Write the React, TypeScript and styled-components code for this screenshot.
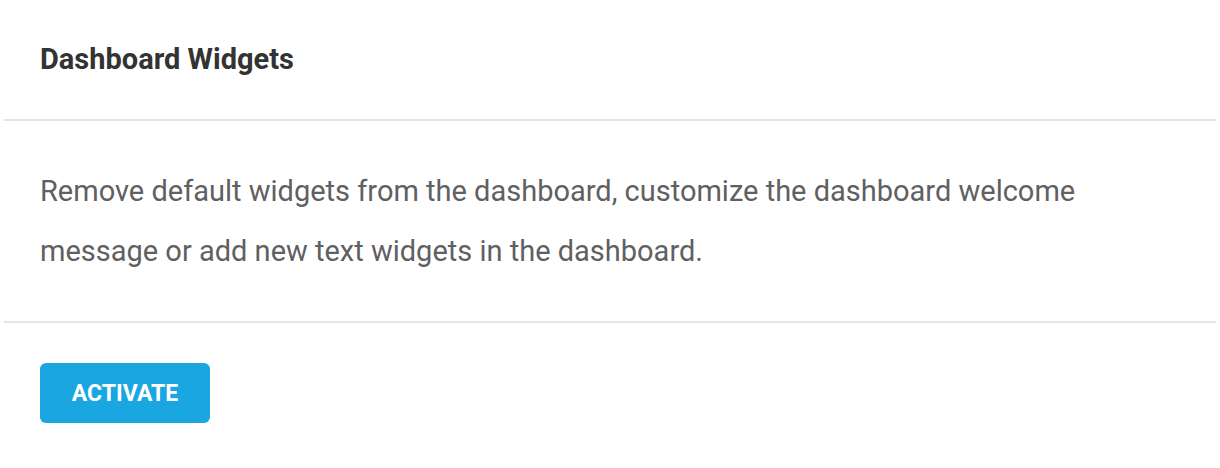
import React from "react";
import styled, { createGlobalStyle } from "styled-components";

const Global = createGlobalStyle`
  html, body { margin: 0; padding: 0; background: #ffffff; }
  body { font-family: Roboto, "Liberation Sans", sans-serif; }
`;

const Page = styled.div`
  padding: 0 4px;
  width: 1220px;
  box-sizing: border-box;
`;

const Card = styled.section`
  display: flex;
  flex-direction: column;
  background: #ffffff;
`;

const Header = styled.header`
  height: 121px;
  box-sizing: border-box;
  padding: 40px 36px 0;
  border-bottom: 2px solid #e5e5e5;
`;

const Title = styled.h2`
  margin: 0;
  font-size: 29px;
  line-height: 38px;
  font-weight: 700;
  color: #333333;
`;

const Body = styled.div`
  height: 202px;
  box-sizing: border-box;
  padding: 40px 36px 0;
  border-bottom: 2px solid #e5e5e5;
`;

const Text = styled.p`
  margin: 0;
  font-size: 29px;
  line-height: 60px;
  color: #5f6062;
  max-width: 1100px;
`;

const Footer = styled.div`
  padding: 40px 36px;
  background: #ffffff;
`;

const Button = styled.button`
  display: inline-flex;
  align-items: center;
  justify-content: center;
  width: 170px;
  height: 60px;
  border: none;
  border-radius: 6px;
  background: #1aa7e1;
  color: #ffffff;
  font-family: Roboto, "Liberation Sans", sans-serif;
  font-size: 23px;
  font-weight: 700;
  text-transform: uppercase;
  cursor: pointer;
`;

export default function App() {
  return (
    <Page>
      <Global />
      <Card>
        <Header>
          <Title>Dashboard Widgets</Title>
        </Header>
        <Body>
          <Text>
            Remove default widgets from the dashboard, customize the dashboard welcome message or add new text widgets in the dashboard.
          </Text>
        </Body>
        <Footer>
          <Button>Activate</Button>
        </Footer>
      </Card>
    </Page>
  );
}
